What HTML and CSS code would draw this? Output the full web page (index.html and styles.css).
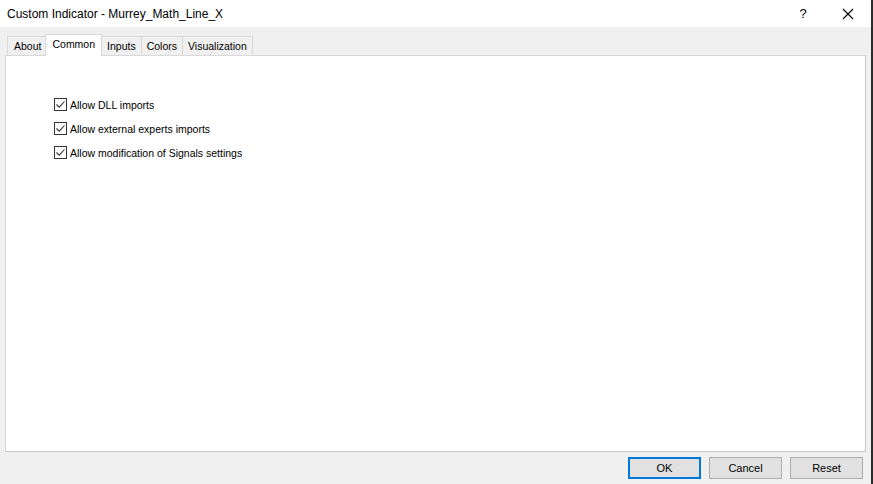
FILE: index.html
```html
<!DOCTYPE html>
<html lang="en">
<head>
  <meta charset="UTF-8" />
  <title>Custom Indicator - Murrey_Math_Line_X</title>
  <link rel="stylesheet" href="styles.css">
</head>
<body>
  <div class="window">
    <div class="titlebar">
      <span class="title">Custom Indicator - Murrey_Math_Line_X</span>
      <span class="help">?</span>
      <span class="close">
        <svg width="12" height="12" viewBox="0 0 12 12"><path d="M1 1 L11 11 M11 1 L1 11" stroke="#000" stroke-width="1.1" fill="none"/></svg>
      </span>
    </div>

    <div class="tabs">
      <div class="tab">About</div>
      <div class="tab active">Common</div>
      <div class="tab">Inputs</div>
      <div class="tab">Colors</div>
      <div class="tab">Visualization</div>
    </div>

    <div class="panel">
      <label class="check"><span class="box"><svg width="11" height="11" viewBox="0 0 11 11"><path d="M1.5 5.5 L4.2 8.2 L9.5 2.5" stroke="#333" stroke-width="1.1" fill="none"/></svg></span>Allow DLL imports</label>
      <label class="check"><span class="box"><svg width="11" height="11" viewBox="0 0 11 11"><path d="M1.5 5.5 L4.2 8.2 L9.5 2.5" stroke="#333" stroke-width="1.1" fill="none"/></svg></span>Allow external experts imports</label>
      <label class="check"><span class="box"><svg width="11" height="11" viewBox="0 0 11 11"><path d="M1.5 5.5 L4.2 8.2 L9.5 2.5" stroke="#333" stroke-width="1.1" fill="none"/></svg></span>Allow modification of Signals settings</label>
    </div>

    <div class="buttons">
      <button class="btn default">OK</button>
      <button class="btn">Cancel</button>
      <button class="btn">Reset</button>
    </div>
  </div>
  <div class="edge"></div>
</body>
</html>
```

FILE: styles.css
```css
body {
  margin: 0;
  width: 873px;
  height: 484px;
  overflow: hidden;
  background-color: #f0f0f0;
  font-family: "Liberation Sans", Arial, sans-serif;
  font-size: 10.5px;
  color: #000;
  display: flex;
}
.window {
  width: 871px;
  display: flex;
  flex-direction: column;
}
.edge {
  width: 2px;
  background-color: #2b2b2b;
}
.titlebar {
  height: 27px;
  background-color: #fff;
  display: flex;
  align-items: center;
  padding-left: 7px;
}
.title {
  font-size: 12px;
  flex: 1;
}
.help {
  font-size: 13px;
  width: 46px;
  text-align: center;
}
.close {
  width: 44px;
  display: flex;
  justify-content: center;
  margin-right: 1px;
}
.tabs {
  display: flex;
  align-items: flex-end;
  height: 28px;
  padding-left: 7px;
}
.tab {
  height: 18px;
  line-height: 19px;
  padding: 0 5px;
  border: 1px solid #d9d9d9;
  border-bottom: none;
  margin-right: -1px;
  background-color: #f0f0f0;
}
.tab:first-child {
  padding: 0 6px;
}
.tab.active {
  height: 21px;
  line-height: 19px;
  background-color: #fff;
  margin: 0 -1px -1px -2px;
  padding: 0 6px;
  position: relative;
  z-index: 1;
}
.panel {
  margin-left: 5px;
  width: 861px;
  height: 397px;
  background-color: #fff;
  border: 1px solid #d9d9d9;
  border-right-color: #c8c8c8;
  border-bottom-color: #c8c8c8;
  padding: 42px 0 0 48px;
  box-sizing: border-box;
  display: flex;
  flex-direction: column;
  gap: 11px;
}
.check {
  display: flex;
  align-items: center;
  height: 13px;
}
.box {
  width: 11px;
  height: 11px;
  border: 1px solid #333;
  margin-right: 3px;
  display: flex;
}
.buttons {
  display: flex;
  justify-content: flex-end;
  gap: 8px;
  padding: 5px 8px 0 0;
}
.btn {
  width: 73px;
  height: 22px;
  background-color: #e1e1e1;
  border: 1px solid #adadad;
  font-family: "Liberation Sans", Arial, sans-serif;
  font-size: 11px;
  padding: 0;
}
.btn.default {
  border: 2px solid #0078d7;
}
```
